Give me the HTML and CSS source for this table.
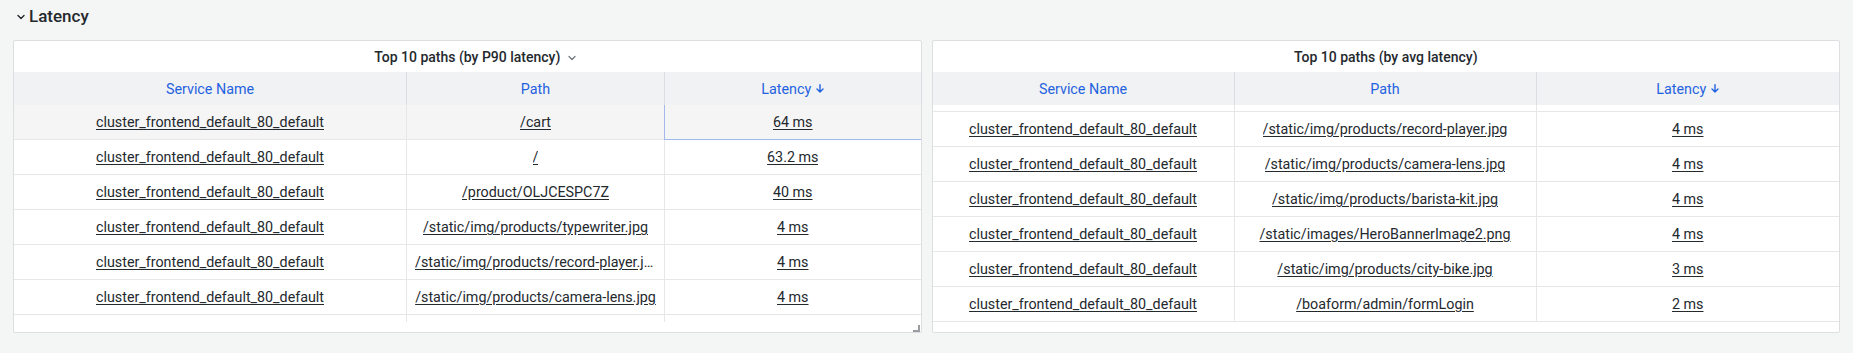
FILE: index.html
```html
<!DOCTYPE html>
<html lang="en">
<head>
<meta charset="utf-8">
<title>Latency</title>
<link rel="stylesheet" href="styles.css">
</head>
<body>
<div class="page">
  <div class="section-header">
    <svg class="section-chevron" width="8" height="6" viewBox="0 0 8 6"><path d="M1 1.5 L4 4.5 L7 1.5" fill="none" stroke="#24292e" stroke-width="1.4" stroke-linecap="round" stroke-linejoin="round"/></svg>
    <span class="section-title">Latency</span>
  </div>
  <div class="panels">
    <div class="panel">
      <div class="panel-title">
        <span class="title-text">Top 10 paths (by P90 latency)<svg class="title-chevron" width="8" height="6" viewBox="0 0 8 6"><path d="M1 1.5 L4 4.5 L7 1.5" fill="none" stroke="#6e7379" stroke-width="1.2" stroke-linecap="round" stroke-linejoin="round"/></svg></span>
      </div>
      <div class="table cols-a">
        <div class="thead">
          <div class="th">Service Name</div>
          <div class="th">Path</div>
          <div class="th">Latency<svg class="sort-arrow" width="8" height="9" viewBox="0 0 8 9"><path d="M4 0.8 V8 M1 5 L4 8 L7 5" fill="none" stroke="#1f62e0" stroke-width="1.4" stroke-linecap="round" stroke-linejoin="round"/></svg></div>
        </div>
        <div class="tbody">
          <div class="tr hovered">
            <div class="td"><a>cluster_frontend_default_80_default</a></div>
            <div class="td"><a>/cart</a></div>
            <div class="td focused"><a>64 ms</a></div>
          </div>
          <div class="tr">
            <div class="td"><a>cluster_frontend_default_80_default</a></div>
            <div class="td"><a>/</a></div>
            <div class="td"><a>63.2 ms</a></div>
          </div>
          <div class="tr">
            <div class="td"><a>cluster_frontend_default_80_default</a></div>
            <div class="td"><a>/product/OLJCESPC7Z</a></div>
            <div class="td"><a>40 ms</a></div>
          </div>
          <div class="tr">
            <div class="td"><a>cluster_frontend_default_80_default</a></div>
            <div class="td"><a>/static/img/products/typewriter.jpg</a></div>
            <div class="td"><a>4 ms</a></div>
          </div>
          <div class="tr">
            <div class="td"><a>cluster_frontend_default_80_default</a></div>
            <div class="td"><a>/static/img/products/record-player.jpg</a></div>
            <div class="td"><a>4 ms</a></div>
          </div>
          <div class="tr">
            <div class="td"><a>cluster_frontend_default_80_default</a></div>
            <div class="td"><a>/static/img/products/camera-lens.jpg</a></div>
            <div class="td"><a>4 ms</a></div>
          </div>
          <div class="tr">
            <div class="td"></div>
            <div class="td"></div>
            <div class="td"></div>
          </div>
        </div>
      </div>
      <svg class="resize-handle" width="7" height="7" viewBox="0 0 7 7"><path d="M6 0 V6 H0" fill="none" stroke="#9a9da1" stroke-width="2"/></svg>
    </div>
    <div class="panel">
      <div class="panel-title">
        <span class="title-text">Top 10 paths (by avg latency)</span>
      </div>
      <div class="table cols-b">
        <div class="thead">
          <div class="th">Service Name</div>
          <div class="th">Path</div>
          <div class="th">Latency<svg class="sort-arrow" width="8" height="9" viewBox="0 0 8 9"><path d="M4 0.8 V8 M1 5 L4 8 L7 5" fill="none" stroke="#1f62e0" stroke-width="1.4" stroke-linecap="round" stroke-linejoin="round"/></svg></div>
        </div>
        <div class="tbody bottom">
          <div class="tr">
            <div class="td"></div>
            <div class="td"></div>
            <div class="td"></div>
          </div>
          <div class="tr">
            <div class="td"><a>cluster_frontend_default_80_default</a></div>
            <div class="td"><a>/static/img/products/record-player.jpg</a></div>
            <div class="td"><a>4 ms</a></div>
          </div>
          <div class="tr">
            <div class="td"><a>cluster_frontend_default_80_default</a></div>
            <div class="td"><a>/static/img/products/camera-lens.jpg</a></div>
            <div class="td"><a>4 ms</a></div>
          </div>
          <div class="tr">
            <div class="td"><a>cluster_frontend_default_80_default</a></div>
            <div class="td"><a>/static/img/products/barista-kit.jpg</a></div>
            <div class="td"><a>4 ms</a></div>
          </div>
          <div class="tr">
            <div class="td"><a>cluster_frontend_default_80_default</a></div>
            <div class="td"><a>/static/images/HeroBannerImage2.png</a></div>
            <div class="td"><a>4 ms</a></div>
          </div>
          <div class="tr">
            <div class="td"><a>cluster_frontend_default_80_default</a></div>
            <div class="td"><a>/static/img/products/city-bike.jpg</a></div>
            <div class="td"><a>3 ms</a></div>
          </div>
          <div class="tr">
            <div class="td"><a>cluster_frontend_default_80_default</a></div>
            <div class="td"><a>/boaform/admin/formLogin</a></div>
            <div class="td"><a>2 ms</a></div>
          </div>
        </div>
      </div>
    </div>
  </div>
</div>
</body>
</html>
```

FILE: styles.css
```css
* { box-sizing: border-box; }
html, body {
  margin: 0;
  padding: 0;
  background: #f4f5f5;
  font-family: Roboto, "Liberation Sans", Arial, sans-serif;
  color: #24292e;
  font-size: 14px;
}
.page {
  padding: 0 13px;
}
.section-header {
  height: 32px;
  display: flex;
  align-items: center;
  padding-left: 4px;
  gap: 4px;
}
.section-chevron { display: block; margin-top: 1px; }
.section-title {
  font-size: 17px;
  font-weight: 500;
  color: #24292e;
}
.panels {
  margin-top: 8px;
  display: flex;
  gap: 10px;
}
.panel {
  position: relative;
  flex: 1 1 0;
  height: 293px;
  background: #fff;
  border: 1px solid #dcdee1;
  border-radius: 2px;
  padding-bottom: 10px;
  display: flex;
  flex-direction: column;
}
.panel-title {
  height: 31px;
  flex: none;
  display: flex;
  align-items: center;
  justify-content: center;
}
.title-text {
  position: relative;
  font-weight: 500;
  font-size: 14px;
  color: #24292e;
}
.title-chevron {
  position: absolute;
  left: calc(100% + 8px);
  top: 50%;
  margin-top: -2px;
}
.table {
  flex: 1 1 auto;
  display: flex;
  flex-direction: column;
  min-height: 0;
}
.thead, .tr {
  display: grid;
}
.cols-a .thead, .cols-a .tr { grid-template-columns: 392px 258px 1fr; }
.cols-b .thead, .cols-b .tr { grid-template-columns: 301px 302px 1fr; }
.thead {
  height: 33px;
  flex: none;
  background: #f1f2f3;
}
.th {
  display: flex;
  align-items: center;
  justify-content: center;
  gap: 5px;
  color: #1f62e0;
  font-weight: 400;
  font-size: 14.3px;
}
.th + .th { border-left: 1px solid #dcdee1; }
.sort-arrow { display: block; }
.tbody {
  height: 217px;
  flex: none;
  overflow: hidden;
  display: flex;
  flex-direction: column;
}
.tbody.bottom { justify-content: flex-end; }
.tr {
  height: 35px;
  flex: none;
}
.tr.hovered { background: #f5f5f5; }
.td {
  border-bottom: 1px solid #e6e7e8;
  display: flex;
  align-items: center;
  justify-content: center;
  padding: 0 8px;
  min-width: 0;
  overflow: hidden;
  font-size: 14.3px;
}
.td + .td { border-left: 1px solid #e6e7e8; }
.td.focused {
  border-left-color: #a3b9ec;
  border-bottom-color: #a3b9ec;
}
.td a {
  color: #24292e;
  text-decoration: underline;
  text-underline-offset: 2px;
  white-space: nowrap;
  overflow: hidden;
  text-overflow: ellipsis;
  max-width: 100%;
}
.resize-handle {
  position: absolute;
  right: 1px;
  bottom: 0px;
}
```
